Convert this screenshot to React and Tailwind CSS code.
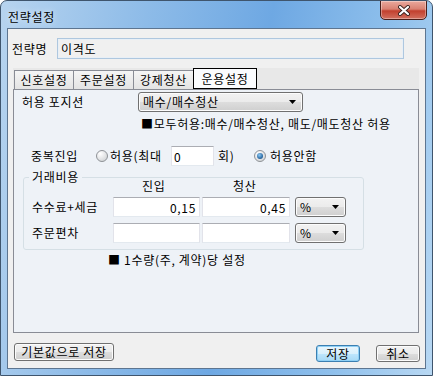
import React from "react";

const btn =
  "rounded-[3px] border border-[#707070] bg-[linear-gradient(#f2f2f2_0%,#ebebeb_50%,#dddddd_51%,#cfcfcf_100%)] shadow-[inset_0_0_0_1px_#fcfcfc] flex items-center justify-center leading-[14px]";

const edit =
  "h-[20px] bg-white border border-[#e2e3ea] border-t-[#abadb3] border-b-[#e3e9ef] outline-none leading-[14px] tracking-[0.7px]";

function Arrow() {
  return (
    <svg width="7" height="4" viewBox="0 0 7 4" className="shrink-0">
      <path d="M0 0h7L3.5 4z" fill="#000" />
    </svg>
  );
}

function Combo({ className, text }) {
  return (
    <div
      className={`${className} h-[20px] rounded-[3px] border border-[#707070] bg-[linear-gradient(#f2f2f2_0%,#ebebeb_50%,#dddddd_51%,#cfcfcf_100%)] shadow-[inset_0_0_0_1px_#fcfcfc] flex items-center justify-between pl-[4px] pr-[6px] leading-[14px]`}
    >
      <span>{text}</span>
      <Arrow />
    </div>
  );
}

function Radio({ checked }) {
  return (
    <svg width="12" height="12" viewBox="0 0 12 12" className="shrink-0">
      <defs>
        <radialGradient id={checked ? "rOn" : "rOff"} cx="0.35" cy="0.3" r="0.8">
          <stop offset="0" stopColor="#ffffff" />
          <stop offset="1" stopColor="#cfd1d4" />
        </radialGradient>
        <radialGradient id="rDot" cx="0.4" cy="0.35" r="0.7">
          <stop offset="0" stopColor="#8cc8f4" />
          <stop offset="1" stopColor="#15548f" />
        </radialGradient>
      </defs>
      <circle cx="6" cy="6" r="5.5" fill={`url(#${checked ? "rOn" : "rOff"})`} stroke="#8e9297" />
      {checked && <circle cx="6" cy="6" r="3" fill="url(#rDot)" />}
    </svg>
  );
}

export default function App() {
  return (
    <div className="w-[433px] h-[376px] rounded-t-[7px] border border-[#3f556d] bg-[linear-gradient(100deg,#b7d4ef_0%,#8dbbe8_30%,#6ea8e3_55%,#8fc0ec_80%,#b8d8f3_100%)] flex flex-col font-['Noto_Sans_CJK_KR',sans-serif] text-[12px] tracking-[0.7px] text-black overflow-hidden">
      {/* title bar */}
      <div className="h-[27px] flex items-start justify-between shrink-0">
        <div className="pl-[7px] pt-[9px] leading-[14px] [text-shadow:0_0_6px_rgba(255,255,255,0.8)]">전략설정</div>
        <div className="mr-[5px] -mt-[1px] w-[47px] h-[20px] rounded-b-[5px] border border-[#4a1f1a] bg-[linear-gradient(#eaa99d_0%,#d98172_45%,#c2402e_55%,#d2705f_100%)] shadow-[inset_0_0_0_1px_rgba(255,255,255,0.35)] flex items-center justify-center">
          <svg width="14" height="11" viewBox="0 0 14 11">
            <path d="M3 2l8 7M11 2l-8 7" stroke="#3a2420" strokeWidth="4" strokeLinecap="round" />
            <path d="M3 2l8 7M11 2l-8 7" stroke="#fff" strokeWidth="2.2" strokeLinecap="round" />
          </svg>
        </div>
      </div>

      {/* client area */}
      <div className="mx-[6px] mb-[6px] flex-1 border border-[#5d7590] bg-[#f0f0f0] flex flex-col">
        <div className="mt-[9px] h-[21px] flex items-center">
          <span className="pl-[4px] w-[49px] leading-[14px]">전략명</span>
          <div className="w-[347px] h-[21px] border border-[#aec7df] shadow-[inset_0_0_0_1px_#e8eff6] flex items-center pl-[3px] leading-[14px]">
            이격도
          </div>
        </div>

        {/* tabs */}
        <div className="mt-[9px] ml-[5px] w-[406px] h-[21px] bg-[#e8e8e8] flex items-end pl-[1px]">
          <div className="w-[60px] h-[19px] border border-b-0 border-[#898c95] bg-[linear-gradient(#f5f5f5,#e3e3e3)] flex items-center justify-center leading-[14px]">
            신호설정
          </div>
          <div className="-ml-[1px] w-[61px] h-[19px] border border-b-0 border-[#898c95] bg-[linear-gradient(#f5f5f5,#e3e3e3)] flex items-center justify-center leading-[14px]">
            주문설정
          </div>
          <div className="-ml-[1px] w-[61px] h-[19px] border border-b-0 border-[#898c95] bg-[linear-gradient(#f5f5f5,#e3e3e3)] flex items-center justify-center leading-[14px]">
            강제청산
          </div>
          <div className="-ml-[1px] w-[64px] h-[21px] border border-black bg-[#fbfcfe] flex items-center justify-center leading-[14px]">
            운용설정
          </div>
        </div>

        {/* tab panel */}
        <div className="ml-[5px] w-[406px] h-[244px] border border-[#898c95] bg-[#eef2f7] flex flex-col">
          <div className="mt-[2px] h-[20px] flex items-center">
            <span className="pl-[8px] w-[124px] leading-[14px]">허용 포지션</span>
            <Combo className="w-[165px]" text="매수/매수청산" />
          </div>
          <div className="mt-[5px] pl-[127px] leading-[14px] whitespace-nowrap">■모두허용:매수/매수청산, 매도/매도청산 허용</div>

          <div className="mt-[15px] h-[20px] flex items-center leading-[14px]">
            <span className="pl-[17px] w-[82px]">중복진입</span>
            <Radio />
            <span className="ml-[2px] w-[61px]">허용(최대</span>
            <input defaultValue="0" className={`${edit} w-[43px] pl-[2px]`} />
            <span className="ml-[4px] w-[36px]">회)</span>
            <Radio checked />
            <span className="ml-[4px]">허용안함</span>
          </div>

          <fieldset className="mt-[5px] ml-[9px] w-[341px] rounded-[3px] border border-[#d5dfe5] pb-[6px]">
            <legend className="ml-[5px] px-[3px] leading-[12px]">거래비용</legend>
            <div className="-mt-[4px] h-[14px] flex leading-[14px]">
              <span className="w-[89px]" />
              <span className="w-[87px] pl-[29px]">진입</span>
              <span className="ml-[2px] w-[88px] pl-[31px]">청산</span>
            </div>
            <div className="mt-[4px] h-[20px] flex items-center leading-[14px]">
              <span className="pl-[8px] w-[89px] whitespace-nowrap">수수료+세금</span>
              <input defaultValue="0,15" className={`${edit} w-[87px] text-right pr-[3px]`} />
              <input defaultValue="0,45" className={`${edit} ml-[2px] w-[88px] text-right pr-[3px]`} />
              <Combo className="ml-[5px] w-[51px]" text="%" />
            </div>
            <div className="mt-[6px] h-[20px] flex items-center leading-[14px]">
              <span className="pl-[8px] w-[89px]">주문편차</span>
              <input defaultValue="" className={`${edit} w-[87px] text-right pr-[3px]`} />
              <input defaultValue="" className={`${edit} ml-[2px] w-[88px] text-right pr-[3px]`} />
              <Combo className="ml-[5px] w-[51px]" text="%" />
            </div>
          </fieldset>

          <div className="mt-[3px] pl-[94px] leading-[14px]">■ 1수량(주, 계약)당 설정</div>
        </div>

        {/* buttons */}
        <div className="mt-[10px] flex items-start">
          <div className={`${btn} ml-[6px] w-[100px] h-[18px]`}>기본값으로 저장</div>
          <div className="ml-auto mt-[2px] w-[44px] h-[17px] rounded-[3px] border border-[#3c7fb1] bg-[linear-gradient(#eaf6fd_0%,#d9f0fc_50%,#bee6fd_51%,#a7d9f5_100%)] shadow-[inset_0_0_0_1px_#8fd0f5] flex items-center justify-center leading-[14px]">
            저장
          </div>
          <div className={`${btn} ml-[16px] mr-[5px] mt-[2px] w-[44px] h-[17px]`}>취소</div>
        </div>
      </div>
    </div>
  );
}
